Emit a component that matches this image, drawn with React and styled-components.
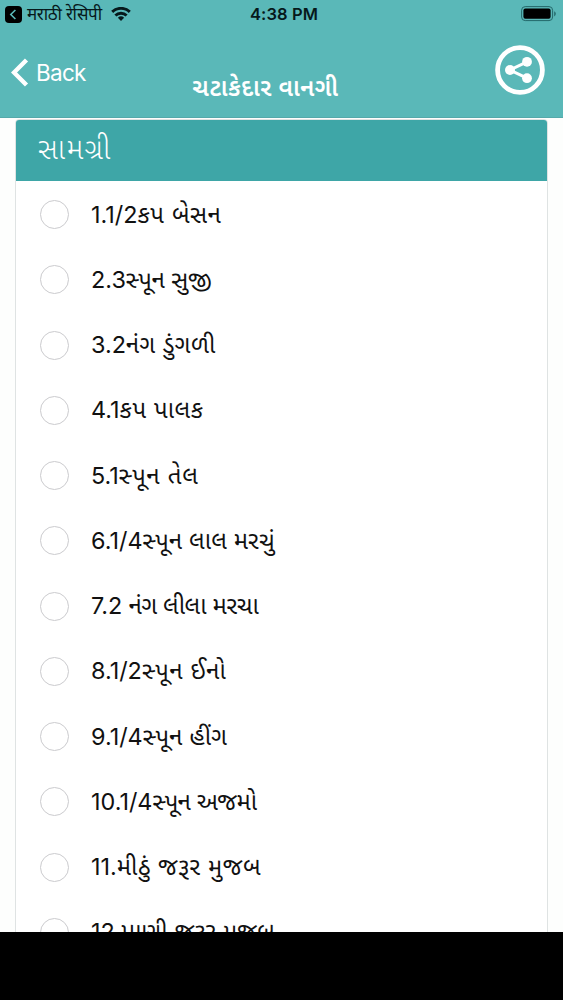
import React from "react";
import styled, { createGlobalStyle } from "styled-components";

const ingredients = [
  { id: 1, amount: "1.1/2", name: "કપ બેસન", spacing: 0.6 },
  { id: 2, amount: "2.3", name: "સ્પૂન સુજી", spacing: -0.2 },
  { id: 3, amount: "3.2", name: "નંગ ડુંગળી", spacing: 0.45 },
  { id: 4, amount: "4.1", name: "કપ પાલક", spacing: 0.6 },
  { id: 5, amount: "5.1", name: "સ્પૂન તેલ", spacing: 0.7 },
  { id: 6, amount: "6.1/4", name: "સ્પૂન લાલ મરચું", spacing: 0.1 },
  { id: 7, amount: "7.2", name: " નંગ લીલા મરચા", spacing: -0.4 },
  { id: 8, amount: "8.1/2", name: "સ્પૂન ઈનો", spacing: 0.6 },
  { id: 9, amount: "9.1/4", name: "સ્પૂન હીંગ", spacing: 0.15 },
  { id: 10, amount: "10.1/4", name: "સ્પૂન અજમો", spacing: -0.5 },
  { id: 11, amount: "11.", name: "મીઠું જરૂર મુજબ", spacing: 0.5 },
  { id: 12, amount: "12.", name: "પાણી જરૂર મુજબ", spacing: 0.1 },
];

function StatusBar() {
  return (
    <StatusContainer>
      <StatusLeft>
        <svg width="17" height="17" viewBox="0 0 17 17">
          <rect width="17" height="17" rx="4" fill="#000" />
          <path d="M10.4 4L5.8 8.5l4.6 4.5" fill="none" stroke="#5ab8b8" strokeWidth="1.6" />
        </svg>
        <AppName>मराठी रेसिपी</AppName>
        <svg width="20" height="14" viewBox="0 0 20 14">
          <g fill="none" stroke="#06191b" strokeWidth="2.9">
            <path d="M1.2 4.9a12.6 12.6 0 0 1 17.6 0" />
            <path d="M4.4 8.5a8 8 0 0 1 11.2 0" />
          </g>
          <path d="M6.9 10.8a4.5 4.5 0 0 1 6.2 0L10 14z" fill="#06191b" />
        </svg>
      </StatusLeft>
      <Clock>4:38 PM</Clock>
      <StatusRight>
        <svg width="36" height="16" viewBox="0 0 36 16">
          <rect x="0.6" y="0.6" width="31" height="14" rx="3.6" fill="none" stroke="#24686a" strokeWidth="1" />
          <rect x="2.4" y="2.5" width="27.2" height="10.2" rx="2" fill="#000" />
          <path d="M33.2 5.2q1.6 0.7 1.6 2.6t-1.6 2.6z" fill="#24686a" />
        </svg>
      </StatusRight>
    </StatusContainer>
  );
}

function Header() {
  return (
    <HeaderContainer>
      <StatusBar />
      <NavBar>
        <BackButton>
          <svg width="18" height="30" viewBox="0 0 18 30">
            <path d="M15.5 2L3 14.5l12.5 12.5" fill="none" stroke="#fff" strokeWidth="4.4" />
          </svg>
          <span>Back</span>
        </BackButton>
        <Title>ચટાકેદાર વાનગી</Title>
        <ShareButton aria-label="Share">
          <svg width="50" height="50" viewBox="0 0 50 50">
            <circle cx="25" cy="25" r="22.4" fill="none" stroke="#fff" strokeWidth="4.8" />
            <path d="M32 16.8L15 25l17 8.2" fill="none" stroke="#fff" strokeWidth="3" />
            <g fill="#fff">
              <circle cx="32" cy="16.8" r="4.9" />
              <circle cx="15" cy="25" r="5" />
              <circle cx="32" cy="33.2" r="4.9" />
            </g>
          </svg>
        </ShareButton>
      </NavBar>
    </HeaderContainer>
  );
}

function Ingredient({ item }) {
  return (
    <Row>
      <Radio />
      <Label>
        <Amount>{item.amount}</Amount>
        <Name $spacing={item.spacing}>{item.name}</Name>
      </Label>
    </Row>
  );
}

function App() {
  return (
    <Screen>
      <GlobalStyle />
      <Header />
      <Content>
        <Card>
          <CardHeader>સામગ્રી</CardHeader>
          <List>
            {ingredients.map((item) => (
              <Ingredient key={item.id} item={item} />
            ))}
          </List>
        </Card>
      </Content>
    </Screen>
  );
}

const GlobalStyle = createGlobalStyle`
  * {
    box-sizing: border-box;
  }

  body {
    margin: 0;
    background: #000;
    font-family: Inter, "Noto Sans Gujarati", "Noto Sans Devanagari", "Noto Sans", sans-serif;
  }

  svg {
    display: block;
    flex-shrink: 0;
  }
`;

const Screen = styled.div`
  width: 563px;
  height: 1000px;
  display: flex;
  flex-direction: column;
  padding-bottom: 68px;
  overflow: hidden;
  background: #000;
`;

const HeaderContainer = styled.header`
  height: 118px;
  flex-shrink: 0;
  background: #5ab8b8;
  border-bottom: 1px solid #55a9aa;
`;

const StatusContainer = styled.div`
  height: 28px;
  display: grid;
  grid-template-columns: 1fr auto 1fr;
  align-items: center;
  color: #06191b;
`;

const StatusLeft = styled.div`
  display: flex;
  align-items: center;
  padding-left: 5px;
`;

const AppName = styled.span`
  width: 75px;
  margin: 0 9px 0 5px;
  font-size: 17px;
  letter-spacing: -0.4px;
  line-height: 28px;
  white-space: nowrap;
`;

const Clock = styled.span`
  font-size: 16.5px;
  font-weight: 600;
  letter-spacing: 0.1px;
  padding-left: 5px;
`;

const StatusRight = styled.div`
  display: flex;
  justify-content: flex-end;
  padding-right: 6px;
`;

const NavBar = styled.div`
  height: 89px;
  display: grid;
  grid-template-columns: 130px 1fr 162px;
  color: #fff;
`;

const BackButton = styled.button`
  display: flex;
  align-items: center;
  gap: 7px;
  height: 89px;
  padding: 0 0 0 11px;
  border: 0;
  background: none;
  color: #fff;
  font-family: inherit;
  font-size: 22.5px;
  letter-spacing: -0.7px;
`;

const Title = styled.h1`
  margin: 0;
  padding-top: 42px;
  font-size: 24px;
  font-weight: 600;
  line-height: 36px;
  letter-spacing: 0.5px;
  text-align: center;
  white-space: nowrap;
`;

const ShareButton = styled.button`
  justify-self: end;
  height: 50px;
  margin: 17px 18px 0 0;
  padding: 0;
  border: 0;
  background: none;
`;

const Content = styled.main`
  flex: 1;
  min-height: 0;
  padding: 1px 15px 0;
  overflow: hidden;
  background: #fdfefd;
`;

const Card = styled.section`
  border: 1px solid #dfe3e3;
  border-radius: 4px 4px 0 0;
  overflow: hidden;
  background: #fff;
`;

const CardHeader = styled.h2`
  height: 61px;
  margin: 0;
  padding: 0 22px;
  background: #3ea6a7;
  color: #fff;
  font-size: 29px;
  font-weight: 300;
  line-height: 57px;
  letter-spacing: 1.5px;
`;

const List = styled.ul`
  margin: 0;
  padding: 1px 0 0;
  list-style: none;
`;

const Row = styled.li`
  height: 65.25px;
  display: flex;
  align-items: center;
  padding-left: 25px;
`;

const Radio = styled.span`
  width: 29px;
  height: 29px;
  flex-shrink: 0;
  margin-left: -1px;
  border: 1.5px solid #cbcbce;
  border-radius: 50%;
`;

const Label = styled.span`
  margin-left: 22px;
  font-size: 24px;
  line-height: 34px;
  color: #111;
  white-space: pre;
`;

const Amount = styled.span`
  font-size: 23.4px;
`;

const Name = styled.span`
  letter-spacing: ${(props) => props.$spacing}px;
`;

export default App;
